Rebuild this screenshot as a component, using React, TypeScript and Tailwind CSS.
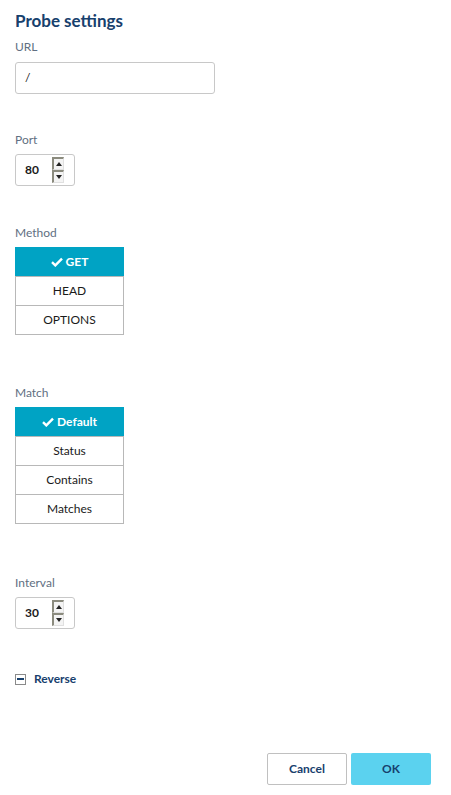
import React from "react";

const font = { fontFamily: "Lato, 'Open Sans', 'Liberation Sans', sans-serif" };

function Check() {
  return (
    <svg width="12" height="10" viewBox="0 0 12 10" className="mr-[3px]">
      <path d="M1 5.2 L4.3 8.4 L11 1.6" fill="none" stroke="white" strokeWidth="2.4" strokeLinejoin="miter" />
    </svg>
  );
}

function Label({ children }: { children: React.ReactNode }) {
  return <div className="text-[12px] leading-[16px] text-[#5f6f82]">{children}</div>;
}

function Spinner({ value }: { value: string }) {
  return (
    <div className="mt-[6px] flex h-[32px] w-[60px] items-center rounded-[3px] border border-[#c8c8c8] bg-white pl-[9px]">
      <span className="w-[27px] text-[12px] font-bold text-[#1a1a1a]">{value}</span>
      <div className="flex flex-col">
        <div className="flex h-[13px] w-[12px] items-center justify-center border-l-2 border-t-2 border-[#8b8b7e] border-r border-r-[#e0e0e0] border-b border-b-[#e0e0e0] bg-[#f4f4f4]">
          <svg width="6" height="4" viewBox="0 0 6 4"><path d="M0 4 L3 0 L6 4Z" fill="#222" /></svg>
        </div>
        <div className="flex h-[13px] w-[12px] items-center justify-center border-l-2 border-t-2 border-[#8b8b7e] border-r border-r-[#e0e0e0] border-b border-b-[#e0e0e0] bg-[#f4f4f4]">
          <svg width="6" height="4" viewBox="0 0 6 4"><path d="M0 0 L3 4 L6 0Z" fill="#222" /></svg>
        </div>
      </div>
    </div>
  );
}

function Group({ items, selected }: { items: string[]; selected: number }) {
  return (
    <div className="mt-[6px] flex w-[109px] flex-col">
      {items.map((it, i) =>
        i === selected ? (
          <div
            key={it}
            className="flex h-[30px] items-center justify-center border border-[#00a3c4] bg-[#00a3c4] text-[12px] font-bold text-white"
          >
            <Check />
            {it}
          </div>
        ) : (
          <div
            key={it}
            className="-mt-px flex h-[30px] items-center justify-center border border-[#b8b8b8] bg-white text-[12px] text-[#1a1a1a] first:mt-0"
          >
            {it}
          </div>
        )
      )}
    </div>
  );
}

export default function App() {
  return (
    <div className="relative h-[795px] w-[451px] bg-white" style={font}>
      <div className="flex flex-col px-[15px] pt-[9px]">
        <div className="text-[17px] font-bold leading-[24px] text-[#17406d]">Probe settings</div>
        <div className="mt-[6px]">
          <Label>URL</Label>
        </div>
        <div className="mt-[7px] flex h-[32px] w-[200px] items-center rounded-[3px] border border-[#c8c8c8] bg-white px-[9px] text-[12px] text-[#222]">
          /
        </div>

        <div className="mt-[38px]">
          <Label>Port</Label>
        </div>
        <Spinner value="80" />

        <div className="mt-[39px]">
          <Label>Method</Label>
        </div>
        <Group items={["GET", "HEAD", "OPTIONS"]} selected={0} />

        <div className="mt-[50px]">
          <Label>Match</Label>
        </div>
        <Group items={["Default", "Status", "Contains", "Matches"]} selected={0} />

        <div className="mt-[51px]">
          <Label>Interval</Label>
        </div>
        <Spinner value="30" />

        <div className="mt-[41px] flex items-center">
          <div className="flex h-[11px] w-[11px] items-center justify-center border border-[#8a8a8a] bg-white">
            <div className="h-[1.5px] w-[7px] bg-[#17406d]" />
          </div>
          <span className="ml-[8px] text-[12px] font-bold text-[#17406d]">Reverse</span>
        </div>

        <div className="mt-[65px] flex justify-end gap-[4px] pr-[5px]">
          <button className="h-[32px] w-[80px] rounded-[2px] border border-[#c0c0c0] bg-white text-[12px] font-bold text-[#17406d]">
            Cancel
          </button>
          <button className="h-[32px] w-[80px] rounded-[2px] bg-[#5bd2ef] text-[12px] font-bold text-[#17406d]">
            OK
          </button>
        </div>
      </div>
    </div>
  );
}
